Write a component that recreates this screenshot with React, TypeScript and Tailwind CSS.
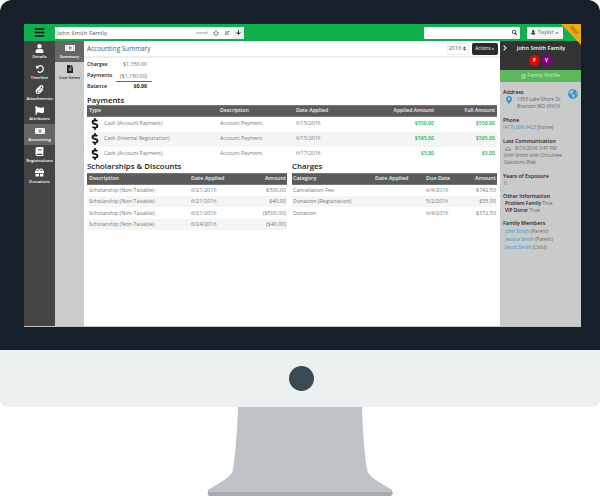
import React from 'react';
import {
  FaBars, FaBook, FaDollarSign, FaFileAlt, FaFlag, FaGift, FaGlobeAmericas, FaMapMarkerAlt,
  FaMoneyBillAlt, FaPaperclip, FaSearch, FaUser, FaUndoAlt, FaArrowDown, FaChevronRight, FaRegStar,
  FaExternalLinkAlt, FaRegFileAlt, FaCaretDown, FaSort, FaInbox,
} from 'react-icons/fa';

const navItems = [
  { label: 'Details', icon: <FaUser size={9} /> },
  { label: 'Timeline', icon: <FaUndoAlt size={8} /> },
  { label: 'Attachments', icon: <FaPaperclip size={9} /> },
  { label: 'Attributes', icon: <FaFlag size={9} /> },
  { label: 'Accounting', icon: <FaMoneyBillAlt size={10} />, active: true },
  { label: 'Registrations', icon: <FaBook size={9} /> },
  { label: 'Donations', icon: <FaGift size={9} /> },
];

const payments = [
  ['Cash (Account Payment)', 'Account Payment', '6/15/2016', '$550.00', '$550.00'],
  ['Cash (Internal Registration)', 'Account Payment', '6/15/2016', '$595.00', '$595.00'],
  ['Cash (Account Payment)', 'Account Payment', '6/17/2016', '$5.00', '$5.00'],
];

const scholarships = [
  ['Scholarship (Non-Taxable)', '6/21/2016', '$500.00'],
  ['Scholarship (Non-Taxable)', '6/21/2016', '$40.00'],
  ['Scholarship (Non-Taxable)', '6/21/2016', '($500.00)'],
  ['Scholarship (Non-Taxable)', '6/24/2016', '($40.00)'],
];

const charges = [
  ['Cancellation Fee', '', '6/4/2016', '$742.50'],
  ['Donation (Registration)', '', '5/2/2016', '$35.00'],
  ['Donation', '', '6/4/2016', '$372.50'],
];

const members = [
  ['John Smith', '(Parent)'],
  ['Jessica Smith', '(Parent)'],
  ['Jacob Smith', '(Child)'],
];

const SideHeading = ({ children, className = '' }: { children: React.ReactNode; className?: string }) => (
  <div className={`text-[5.3px] leading-[8px] font-semibold text-[#222] ${className}`}>{children}</div>
);

const App: React.FC = () => {
  return (
    <div className="w-[600px] h-[496px] bg-white overflow-hidden font-['Open_Sans',sans-serif]">
      {/* Bezel */}
      <div className="h-[350px] bg-[#15202b] rounded-t-[12px] pt-[24px] pl-[24px] pr-[19px]">
        <div className="relative h-[303px] flex flex-col border-b border-[#c4c4c4] overflow-hidden">
          {/* Top bar */}
          <div className="h-[17px] shrink-0 bg-[#0fb14e] flex items-center">
            <div className="w-[31px] flex justify-center text-[#111]"><FaBars size={11} /></div>
            <div className="w-[189px] h-[12px] bg-white flex items-center text-[#555]">
              <span className="ml-[2px] text-[6px] leading-[12px] flex-1">John Smith Family</span>
              <span className="text-[3px] mr-[5px] mt-[2px]">(current)</span>
              <FaRegStar size={6} className="mr-[6px]" />
              <FaExternalLinkAlt size={4} className="mr-[4px]" />
              <span className="w-[11px] h-[12px] bg-[#eee] flex items-center justify-center text-[#111]"><FaArrowDown size={5} /></span>
            </div>
            <div className="ml-[180px] w-[96px] h-[12px] bg-white flex items-center justify-end pr-[3px] text-[#222]">
              <FaSearch size={5} />
            </div>
            <div className="ml-[7px] w-[36px] h-[12px] bg-[#f5f5f5] rounded-[1px] flex items-center justify-center text-[#666] text-[5.5px]">
              <FaUser size={4.5} className="mr-[2px] text-[#333]" />Taylor<FaCaretDown size={4} className="ml-[1px] text-[#333]" />
            </div>
          </div>

          <div className="flex flex-1 min-h-0">
            {/* Left nav */}
            <div className="w-[31px] shrink-0 bg-[#444]">
              {navItems.map(item => (
                <div
                  key={item.label}
                  className={`h-[20.8px] flex flex-col items-center justify-start pt-[2px] text-white ${item.active ? 'bg-[#666]' : ''}`}
                >
                  <div className="h-[10px] flex items-center">{item.icon}</div>
                  <div className="text-[4.2px] leading-[7px] font-semibold whitespace-nowrap">{item.label}</div>
                </div>
              ))}
            </div>

            {/* Sub nav */}
            <div className="w-[29px] shrink-0 bg-[#cbcbcb]">
              <div className="h-[21px] bg-[#666] text-white flex flex-col items-center pt-[2px]">
                <div className="h-[10px] flex items-center"><FaMoneyBillAlt size={10} /></div>
                <div className="text-[4.2px] leading-[7px] font-semibold">Summary</div>
              </div>
              <div className="h-[21px] text-[#222] flex flex-col items-center pt-[2px]">
                <div className="h-[10px] flex items-center"><FaFileAlt size={8} /></div>
                <div className="text-[4.2px] leading-[7px] font-semibold whitespace-nowrap">Line Items</div>
              </div>
            </div>

            {/* Main */}
            <div className="w-[416px] shrink-0 bg-white px-[3px]">
              <div className="h-[17px] -mx-[3px] px-[3px] border-b-2 border-[#eee] flex items-center">
                <span className="text-[6.4px] text-[#555] flex-1">Accounting Summary</span>
                <span className="w-[22px] h-[12px] border border-[#eee] rounded-[2px] flex items-center justify-center text-[5.5px] text-[#555]">
                  2016<FaSort size={5} className="ml-[1px]" />
                </span>
                <span className="ml-[3px] mr-[-1px] w-[26px] h-[12px] bg-[#2b2b2b] rounded-[2px] flex items-center justify-center text-[4.6px] text-white">
                  Actions<FaCaretDown size={4} />
                </span>
              </div>

              <div className="mt-[1px] w-[60px] text-[5.3px] text-[#666]">
                <div className="h-[11px] flex items-center justify-between"><b className="font-semibold text-[#222]">Charges</b><span>$1,150.00</span></div>
                <div className="h-[11px] flex items-center justify-between">
                  <b className="font-semibold text-[#222]">Payments</b>
                  <span className="border-b border-[#666] -mr-[5px] pl-[4px] pr-[5px] leading-[9px] mt-[2px]">($1,150.00)</span>
                </div>
                <div className="h-[11px] flex items-center justify-between"><b className="font-semibold text-[#222]">Balance</b><b className="font-bold text-[#222]">$0.00</b></div>
              </div>

              <div className="mt-[3px] text-[7.8px] leading-[10px] font-semibold text-[#222]">Payments</div>
              <table className="w-full table-fixed text-[5.2px] text-[#777]">
                <thead>
                  <tr className="h-[11px] bg-[#5b5b5b] text-[#f0f0f0] border-y border-[#777]">
                    <th className="w-[133px] text-left pl-[2px] font-semibold">Type</th>
                    <th className="w-[76px] text-left font-semibold">Description</th>
                    <th className="w-[78px] text-left font-semibold">Date Applied</th>
                    <th className="w-[60px] text-right font-semibold">Applied Amount</th>
                    <th className="text-right pr-[2px] font-semibold">Full Amount</th>
                  </tr>
                </thead>
                <tbody>
                  {payments.map((row, i) => (
                    <tr key={i} className={`h-[15px] ${i === 1 ? 'bg-[#f5f5f5]' : ''}`}>
                      <td>
                        <span className="flex items-center">
                          <FaDollarSign size={12} className="text-[#111] ml-[2px] mr-[3px]" />
                          {row[0]}
                        </span>
                      </td>
                      <td>{row[1]}</td>
                      <td>{row[2]}</td>
                      <td className="text-right font-semibold text-[#0fb14e]">{row[3]}</td>
                      <td className="text-right pr-[2px] font-semibold text-[#0fb14e]">{row[4]}</td>
                    </tr>
                  ))}
                </tbody>
              </table>

              <div className="flex gap-[5px]">
                <div className="w-[200px]">
                  <div className="text-[7.8px] leading-[9px] mb-[2px] font-semibold text-[#222]">Scholarships &amp; Discounts</div>
                  <table className="w-full table-fixed text-[5.4px] text-[#777]">
                    <thead>
                      <tr className="h-[11px] bg-[#5b5b5b] text-[#f0f0f0] border-y border-[#777]">
                        <th className="w-[104px] text-left pl-[2px] font-semibold">Description</th>
                        <th className="text-left font-semibold">Date Applied</th>
                        <th className="text-right pr-[1px] font-semibold">Amount</th>
                      </tr>
                    </thead>
                    <tbody>
                      {scholarships.map((row, i) => (
                        <tr key={i} className={`h-[11.5px] ${i % 2 === 1 ? 'bg-[#f5f5f5]' : ''}`}>
                          <td className="pl-[2px]">{row[0]}</td>
                          <td>{row[1]}</td>
                          <td className="text-right pr-[1px]">{row[2]}</td>
                        </tr>
                      ))}
                    </tbody>
                  </table>
                </div>
                <div className="w-[205px]">
                  <div className="text-[7.8px] leading-[9px] mb-[2px] font-semibold text-[#222]">Charges</div>
                  <table className="w-full table-fixed text-[5.4px] text-[#777]">
                    <thead>
                      <tr className="h-[11px] bg-[#5b5b5b] text-[#f0f0f0] border-y border-[#777]">
                        <th className="w-[83px] text-left pl-[1px] font-semibold">Category</th>
                        <th className="w-[51px] text-left font-semibold">Date Applied</th>
                        <th className="w-[36px] text-left font-semibold">Due Date</th>
                        <th className="text-right pr-[1px] font-semibold">Amount</th>
                      </tr>
                    </thead>
                    <tbody>
                      {charges.map((row, i) => (
                        <tr key={i} className={`h-[11.5px] ${i === 1 ? 'bg-[#f5f5f5]' : ''}`}>
                          <td className="pl-[1px]">{row[0]}</td>
                          <td>{row[1]}</td>
                          <td>{row[2]}</td>
                          <td className="text-right pr-[1px]">{row[3]}</td>
                        </tr>
                      ))}
                    </tbody>
                  </table>
                </div>
              </div>
            </div>

            {/* Right panel */}
            <div className="flex-1 bg-[#cacaca] flex flex-col">
              <div className="relative h-[29px] bg-[#333] flex flex-col items-center text-white">
                <FaChevronRight size={6} className="absolute left-[2px] top-[4px]" />
                <div className="mt-[3px] ml-[1px] text-[5.6px] leading-[9px] font-semibold">John Smith Family</div>
                <div className="mt-[2px] flex gap-[1px] text-[4.5px] font-bold">
                  <span className="w-[11px] h-[11px] rounded-full bg-[#f00000] flex items-center justify-center">P</span>
                  <span className="w-[11px] h-[11px] rounded-full bg-[#800080] flex items-center justify-center">V</span>
                </div>
              </div>
              <div className="h-[12px] bg-[#5cb85c] text-[#d6f0d6] text-[5.2px] flex items-center justify-center">
                <FaRegFileAlt size={5} className="mr-[1px]" />Family Profile
              </div>
              <div className="relative px-[3px] pt-[6px] text-[4.8px] leading-[7px] text-[#666]">
                <FaGlobeAmericas size={10} className="absolute right-[3px] top-[7px] text-[#2b95d6]" />
                <SideHeading>Address</SideHeading>
                <div className="flex">
                  <FaMapMarkerAlt size={8} className="ml-[2px] text-[#2b95d6]" />
                  <div className="ml-[4px]">1353 Lake Shore Dr<br />Branson MO 65616</div>
                </div>
                <SideHeading className="mt-[6px]">Phone</SideHeading>
                <div><span className="text-[#2b95d6]">(417) 266-3423</span> [home]</div>
                <SideHeading className="mt-[6px]">Last Communication</SideHeading>
                <div className="flex items-center">
                  <FaInbox size={6} className="ml-[2px] mr-[4px] text-[#999]" />8/16/2016 3:47 PM
                </div>
                <div className="ml-[1px]">John Smith with Circuitree<br />Solutions Web</div>
                <SideHeading className="mt-[6px]">Years of Exposure</SideHeading>
                <div className="ml-[1px]">0</div>
                <SideHeading className="mt-[5px]">Other Information</SideHeading>
                <div className="ml-[2px]"><b className="font-semibold text-[#222]">Problem Family</b> True</div>
                <div className="ml-[2px]"><b className="font-semibold text-[#222]">VIP Donor</b> True</div>
                <SideHeading className="mt-[5px]">Family Members</SideHeading>
                {members.map(([name, role]) => (
                  <div key={name} className="ml-[2px] leading-[8px]">
                    <span className="text-[#2b95d6]">{name}</span> {role}
                  </div>
                ))}
              </div>
            </div>
          </div>

          {/* TEST corner ribbon */}
          <div className="absolute right-0 top-0 w-0 h-0 border-t-[21px] border-l-[20px] border-t-[#f0a80e] border-l-transparent" />
          <div className="absolute right-0 top-[3px] w-[14px] text-center rotate-45 text-[4.5px] leading-[7px] font-bold text-[#9a6a00]">TEST</div>
        </div>
      </div>

      {/* Chin */}
      <div className="h-[57px] bg-[#ecf0f1] rounded-b-[8px] flex items-center justify-center">
        <div className="ml-[2px] w-[25px] h-[25px] rounded-full bg-[#3b4952]" />
      </div>

      {/* Stand */}
      <svg width="600" height="89" viewBox="0 0 600 89" className="block">
        <path d="M238 0 H362 C363 30 365 50 367 62 C368 70 378 74 392 83 V85 H208 V83 C222 74 232 70 233 62 C235 50 237 30 238 0 Z" fill="#bdc3c7" />
        <path d="M208 85 H393 C393 87 392 89 390 89 H210 C208 89 207 87 208 85 Z" fill="#a5abae" />
      </svg>
    </div>
  );
};

export default App;
